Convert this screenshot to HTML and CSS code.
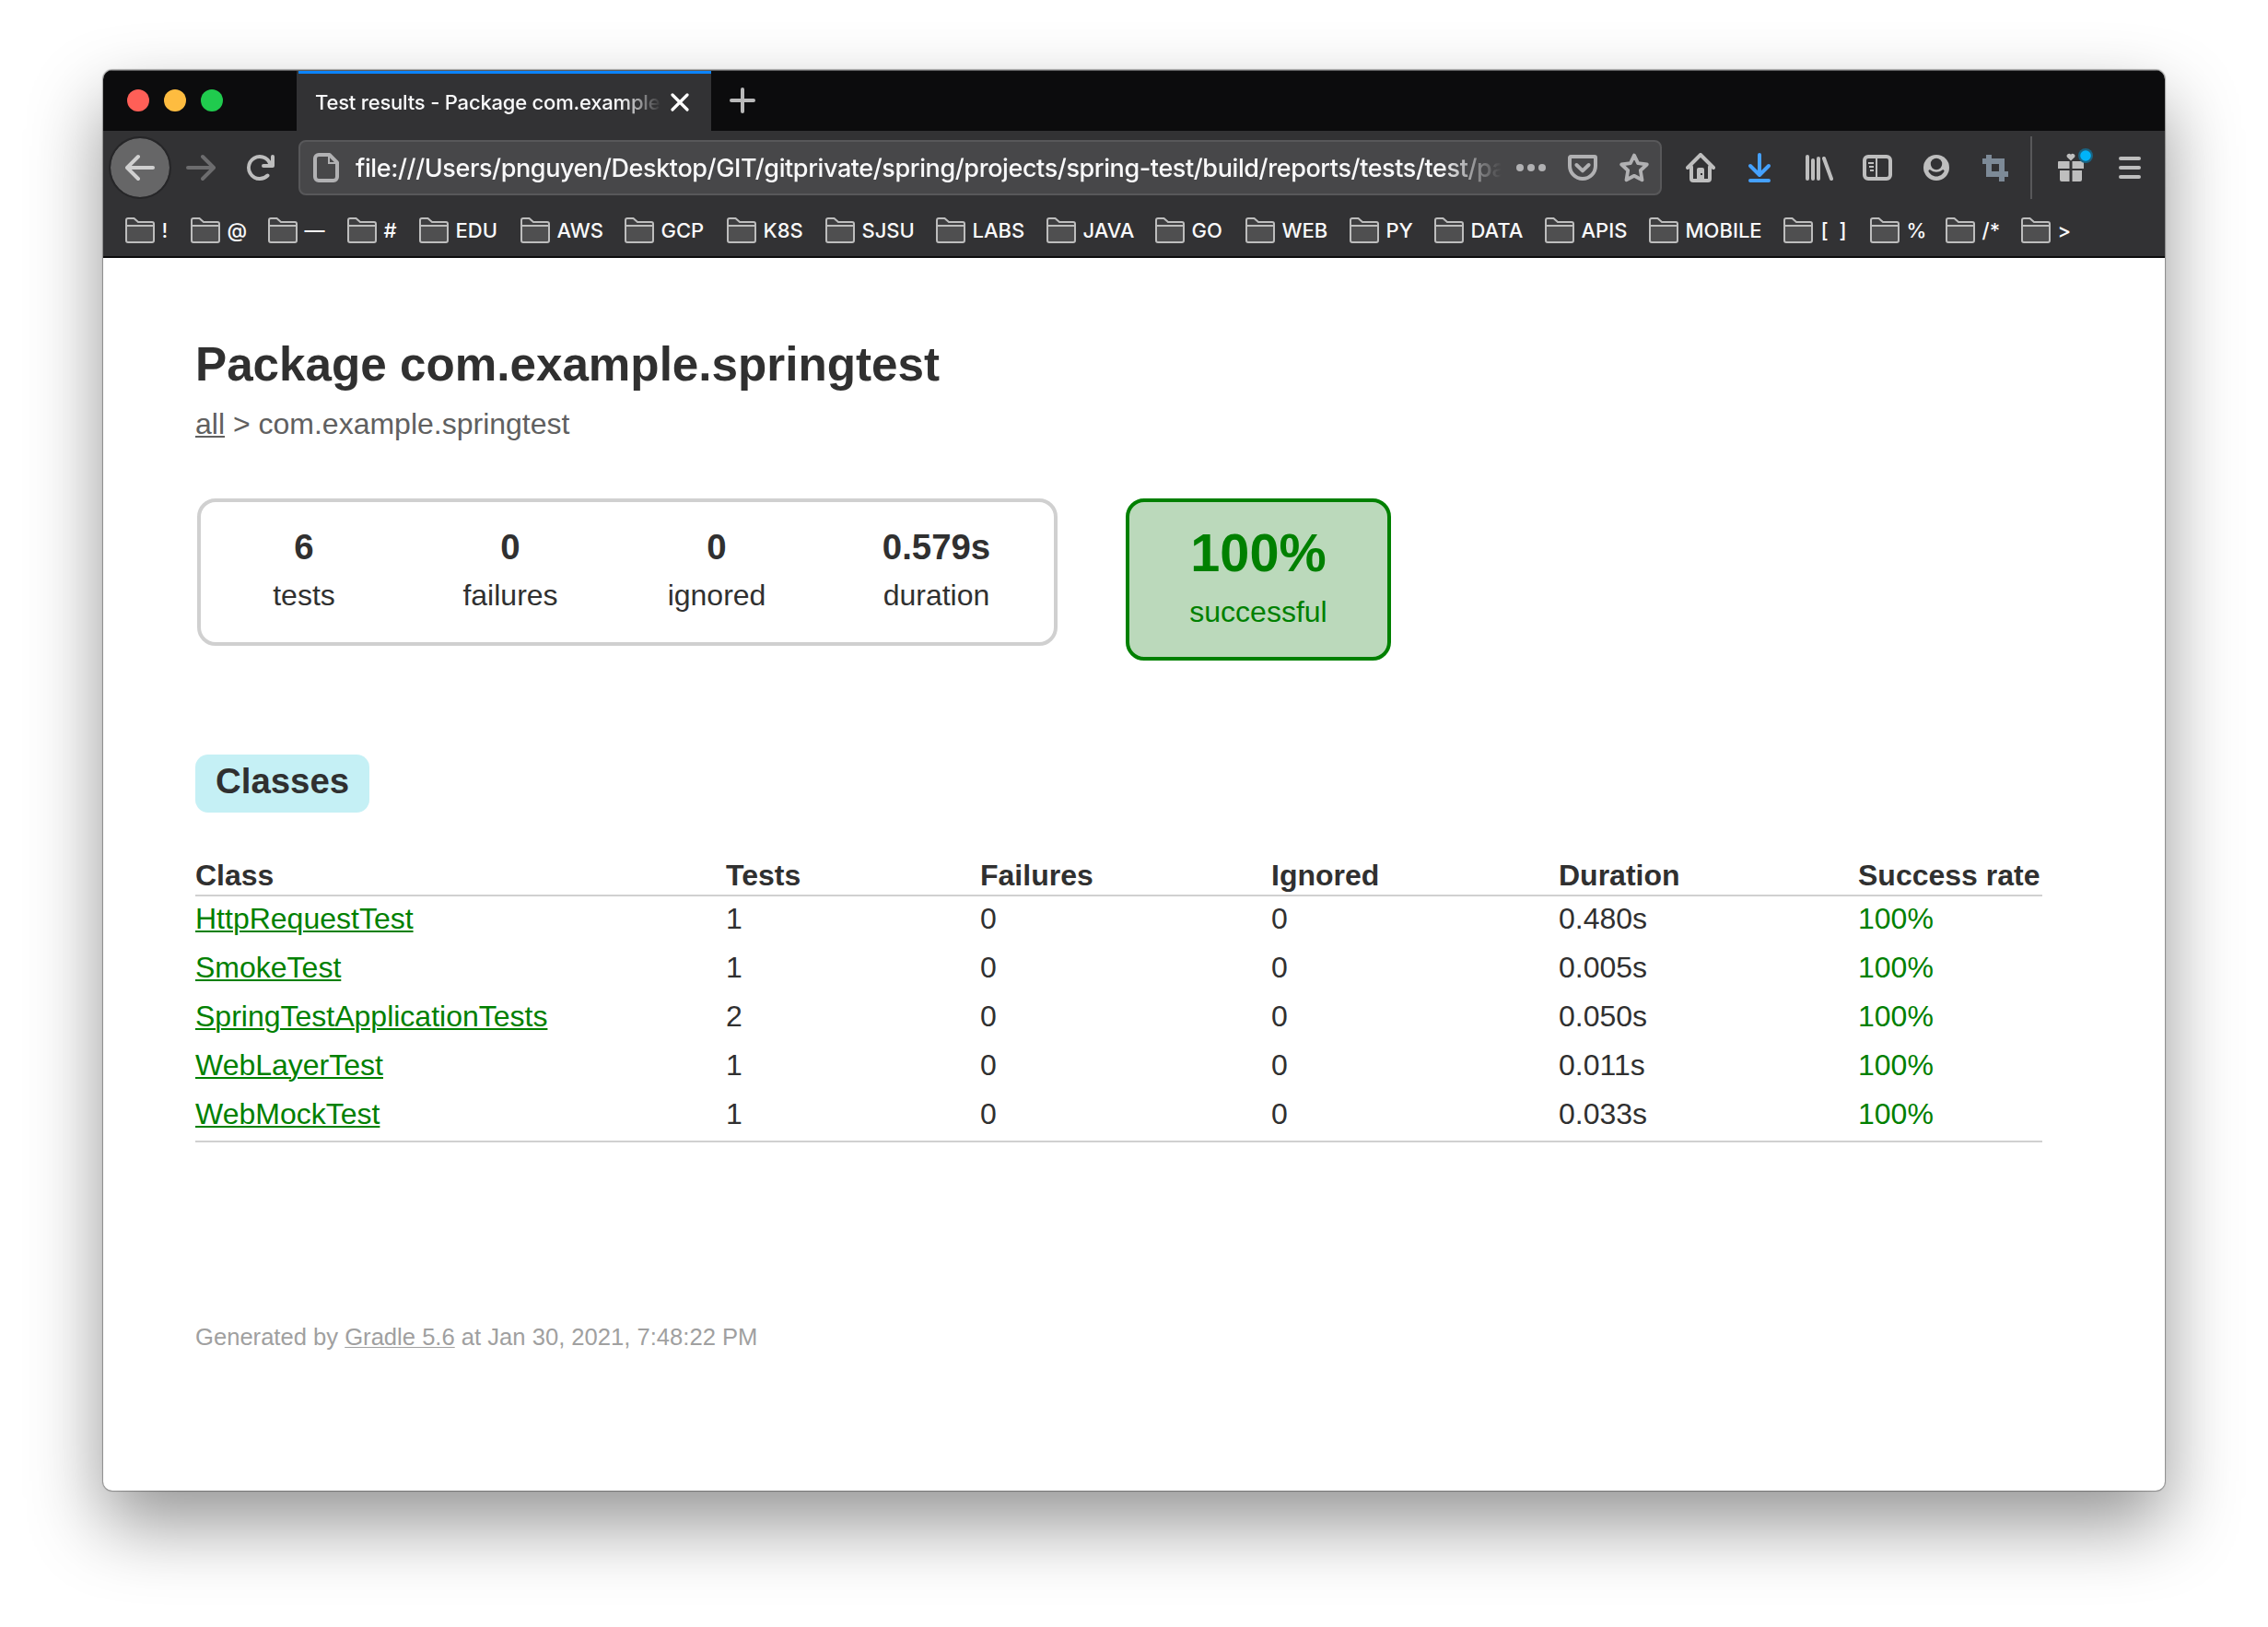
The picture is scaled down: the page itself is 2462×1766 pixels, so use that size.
FILE: index.html
```html
<!DOCTYPE html>
<html lang="en">
<head>
<meta charset="utf-8">
<title>Test results - Package com.example.springtest</title>
<link rel="stylesheet" href="styles.css">
</head>
<body>
<svg class="defs" width="0" height="0" aria-hidden="true">
  <symbol id="folder" viewBox="0 0 32 28">
    <path d="M1 9V3a2 2 0 0 1 2-2h6.500L14 5h15a2 2 0 0 1 2 2v2z" fill="#3e3e40"/>
    <path d="M1 9h30v16a2 2 0 0 1-2 2H3a2 2 0 0 1-2-2z" fill="#4f4f50"/>
    <path d="M1 3a2 2 0 0 1 2-2h6.500L14 5h15a2 2 0 0 1 2 2v18a2 2 0 0 1-2 2H3a2 2 0 0 1-2-2zM1 9h30" fill="none" stroke="#bdbdbd" stroke-width="2"/>
  </symbol>
</svg>
<div class="window">
  <header class="tabbar">
    <div class="lights"><span class="light red"></span><span class="light yellow"></span><span class="light green"></span></div>
    <div class="tab">
      <span class="tab-title">Test results - Package com.example</span>
      <svg class="close" viewBox="0 0 20 20"><path d="M2 2l16 16M18 2L2 18" stroke="#fff" stroke-width="3.200" stroke-linecap="round"/></svg>
    </div>
    <svg class="newtab" viewBox="0 0 28 28"><path d="M14 2v24M2 14h24" stroke="#b9b9b9" stroke-width="4" stroke-linecap="round"/></svg>
  </header>
  <nav class="toolbar">
    <span class="back"><svg class="icon" viewBox="0 0 16 16"><path d="M15 7H3.414l4.293-4.293a1 1 0 0 0-1.414-1.414l-6 6a1 1 0 0 0 0 1.414l6 6a1 1 0 0 0 1.414-1.414L3.414 9H15a1 1 0 0 0 0-2z" fill="#d0d0d0"/></svg></span>
    <span class="button"><svg class="icon" viewBox="0 0 16 16"><path d="M1 7h11.586L8.293 2.707a1 1 0 0 1 1.414-1.414l6 6a1 1 0 0 1 0 1.414l-6 6a1 1 0 0 1-1.414-1.414L12.586 9H1a1 1 0 0 1 0-2z" fill="#6c6c6e"/></svg></span>
    <span class="button"><svg class="icon" viewBox="0 0 16 16"><path d="M15 1a1 1 0 0 0-1 1v2.418A6.995 6.995 0 1 0 8 15a6.954 6.954 0 0 0 4.950-2.050 1 1 0 0 0-1.414-1.414A5.019 5.019 0 1 1 12.549 6H10a1 1 0 0 0 0 2h5a1 1 0 0 0 1-1V2a1 1 0 0 0-1-1z" fill="#bebebe"/></svg></span>
    <div class="urlbar">
      <svg class="icon" viewBox="0 0 16 16" fill="none" stroke="#b1b1b3"><path d="M9.800 1H4a2 2 0 0 0-2 2v10a2 2 0 0 0 2 2h8a2 2 0 0 0 2-2V5.200z" stroke-width="2" stroke-linejoin="round"/><path d="M9.500 1.500v4h4" stroke-width="1"/></svg>
      <span class="url">file:///Users/pnguyen/Desktop/GIT/gitprivate/spring/projects/spring-test/build/reports/tests/test/pa</span>
      <svg class="icon" viewBox="0 0 16 16" fill="#b1b1b3"><circle cx="2" cy="8" r="2"/><circle cx="8" cy="8" r="2"/><circle cx="14" cy="8" r="2"/></svg>
      <svg class="icon" viewBox="0 0 16 16" fill="none" stroke="#b1b1b3" stroke-width="2" stroke-linecap="round" stroke-linejoin="round"><path d="M1.500 2h13a.5.500 0 0 1 .5.500V7A7 7 0 0 1 1 7V2.500a.5.500 0 0 1 .5-.5z"/><path d="M4.700 6.500L8 9.700l3.300-3.200"/></svg>
      <svg class="icon" viewBox="0 0 16 16" fill="none" stroke="#b1b1b3" stroke-width="1.900" stroke-linejoin="round"><path d="M8 1.300l2.050 4.250 4.850.7-3.500 3.250.85 5.150L8 12.400l-4.250 2.250.85-5.150L1.100 6.250l4.850-.7z"/></svg>
    </div>
    <span class="button"><svg class="icon" viewBox="0 0 16 16" fill="none" stroke="#bebebe" stroke-width="2" stroke-linecap="round" stroke-linejoin="round"><path d="M1 8l7-7 7 7"/><path d="M3 7.500V14a1 1 0 0 0 1 1h8a1 1 0 0 0 1-1V7.500"/><path d="M6 15V9a1 1 0 0 1 1-1h2a1 1 0 0 1 1 1v6zM8 11v1h1v-1z" fill="#bebebe" fill-rule="evenodd" stroke="none"/></svg></span>
    <span class="button"><svg class="icon" viewBox="0 0 16 16" fill="none" stroke="#45a1ff" stroke-width="2" stroke-linecap="round" stroke-linejoin="round"><path d="M8 1v10.500M3 7l5 5 5-5M3 15h10"/></svg></span>
    <span class="button"><svg class="icon" viewBox="0 0 16 16" stroke="#bebebe" stroke-width="2" stroke-linecap="round"><path d="M2 2v12M5 4v10M8 3v11M11 3l4 11"/></svg></span>
    <span class="button"><svg class="icon" viewBox="0 0 16 16" fill="none" stroke="#bebebe"><rect x="1" y="2" width="14" height="12" rx="2" stroke-width="2"/><path d="M7.500 2v12M3 5.500h3M3.500 7.500H6M4 9.500h2"/></svg></span>
    <span class="button"><svg class="icon" viewBox="0 0 16 16"><circle cx="8" cy="8" r="7" fill="#bebebe"/><circle cx="8" cy="6" r="3.100" fill="#323234"/><path d="M3.700 9.900c0-.7.600-1 1.100-.7 2 1.500 4.400 1.500 6.400 0 .5-.3 1.100 0 1.100.7C11.500 11.600 9.900 12.800 8 12.800s-3.500-1.200-4.300-2.900z" fill="#323234"/></svg></span>
    <span class="button"><svg class="icon" viewBox="0 0 32 32"><path d="M6 2h6v4h14v14h4v6h-4v5h-6v-5H6V12H2V6h4zM12 12v8h8v-8z" fill="#7d8a97" fill-rule="evenodd"/></svg></span>
    <span class="separator"></span>
    <span class="button"><svg class="gift" viewBox="0 0 36 36"><path d="M3 12h11.500v8H2v-7a1 1 0 0 1 1-1zM17.500 12H29a1 1 0 0 1 1 1v7H17.500zM4 22h10.500v12H6a2 2 0 0 1-2-2zM17.500 22H28v10a2 2 0 0 1-2 2h-8.500zM16 11.500l-4.200-4a2.500 2.500 0 0 1 4.200-2.700 2.500 2.500 0 0 1 4.200 2.700z" fill="#bebebe"/><circle cx="32" cy="6" r="8" fill="#1a6382"/><circle cx="32" cy="6" r="5.800" fill="#00b3f9"/></svg></span>
    <span class="button"><svg class="icon" viewBox="0 0 16 16" stroke="#bebebe" stroke-width="2" stroke-linecap="round"><path d="M3 3h10M3 8h10M3 13h10"/></svg></span>
  </nav>
  <ul class="bookmarks">
    <li><svg class="folder"><use href="#folder"/></svg>!</li>
    <li><svg class="folder"><use href="#folder"/></svg>@</li>
    <li><svg class="folder"><use href="#folder"/></svg>—</li>
    <li><svg class="folder"><use href="#folder"/></svg>#</li>
    <li><svg class="folder"><use href="#folder"/></svg>EDU</li>
    <li><svg class="folder"><use href="#folder"/></svg>AWS</li>
    <li><svg class="folder"><use href="#folder"/></svg>GCP</li>
    <li><svg class="folder"><use href="#folder"/></svg>K8S</li>
    <li><svg class="folder"><use href="#folder"/></svg>SJSU</li>
    <li><svg class="folder"><use href="#folder"/></svg>LABS</li>
    <li><svg class="folder"><use href="#folder"/></svg>JAVA</li>
    <li><svg class="folder"><use href="#folder"/></svg>GO</li>
    <li><svg class="folder"><use href="#folder"/></svg>WEB</li>
    <li><svg class="folder"><use href="#folder"/></svg>PY</li>
    <li><svg class="folder"><use href="#folder"/></svg>DATA</li>
    <li><svg class="folder"><use href="#folder"/></svg>APIS</li>
    <li><svg class="folder"><use href="#folder"/></svg>MOBILE</li>
    <li class="wide"><svg class="folder"><use href="#folder"/></svg>[ ]</li>
    <li><svg class="folder"><use href="#folder"/></svg>%</li>
    <li><svg class="folder"><use href="#folder"/></svg>/*</li>
    <li><svg class="folder"><use href="#folder"/></svg>&gt;</li>
  </ul>
  <main class="report">
    <h1>Package com.example.springtest</h1>
    <div class="breadcrumbs"><a href="#">all</a> &gt; com.example.springtest</div>
    <section class="summary">
      <div class="counters">
        <div class="counter"><strong>6</strong><span>tests</span></div>
        <div class="counter"><strong>0</strong><span>failures</span></div>
        <div class="counter"><strong>0</strong><span>ignored</span></div>
        <div class="counter"><strong>0.579s</strong><span>duration</span></div>
      </div>
      <div class="rate"><strong>100%</strong><span>successful</span></div>
    </section>
    <h2>Classes</h2>
    <table>
      <colgroup><col class="c-class"><col class="c-tests"><col class="c-failures"><col class="c-ignored"><col class="c-duration"><col class="c-rate"></colgroup>
      <thead><tr><th>Class</th><th>Tests</th><th>Failures</th><th>Ignored</th><th>Duration</th><th>Success rate</th></tr></thead>
      <tbody>
        <tr><td><a href="#">HttpRequestTest</a></td><td>1</td><td>0</td><td>0</td><td>0.480s</td><td class="success">100%</td></tr>
        <tr><td><a href="#">SmokeTest</a></td><td>1</td><td>0</td><td>0</td><td>0.005s</td><td class="success">100%</td></tr>
        <tr><td><a href="#">SpringTestApplicationTests</a></td><td>2</td><td>0</td><td>0</td><td>0.050s</td><td class="success">100%</td></tr>
        <tr><td><a href="#">WebLayerTest</a></td><td>1</td><td>0</td><td>0</td><td>0.011s</td><td class="success">100%</td></tr>
        <tr><td><a href="#">WebMockTest</a></td><td>1</td><td>0</td><td>0</td><td>0.033s</td><td class="success">100%</td></tr>
      </tbody>
    </table>
    <footer>Generated by <a href="#">Gradle 5.6</a> at Jan 30, 2021, 7:48:22 PM</footer>
  </main>
</div>
</body>
</html>
```
FILE: styles.css
```css
* { box-sizing: border-box; }

body {
  margin: 0;
  padding: 76px 112px 148px;
  background: #fff;
}

.defs { display: block; }

.window {
  height: 1542px;
  border-radius: 10px;
  background: #fff;
  box-shadow: 0 0 1px 1px rgba(0, 0, 0, .32), 0 36px 80px rgba(0, 0, 0, .42);
  display: flex;
  flex-direction: column;
  overflow: hidden;
  font-family: Inter, "Liberation Sans", sans-serif;
  color: #f9f9fa;
}

/* Tab strip */
.tabbar {
  height: 66px;
  flex: none;
  background: #0c0c0d;
  border-top: 1px solid #5c5c5d;
  display: flex;
  align-items: center;
}

.lights {
  width: 212px;
  height: 65px;
  padding: 0 0 1px 26px;
  border-right: 2px solid #323234;
  display: flex;
  align-items: center;
  gap: 16px;
}

.light { width: 24px; height: 24px; border-radius: 50%; }
.red { background: #ff5f57; }
.yellow { background: #febc40; }
.green { background: #20cb4e; }

.tab {
  width: 448px;
  height: 65px;
  padding-left: 18px;
  background: #323234;
  border-top: 3px solid #0a84ff;
  display: flex;
  align-items: center;
}

.tab-title {
  width: 376px;
  margin-right: 10px;
  font-size: 22px;
  font-weight: 500;
  line-height: 30px;
  letter-spacing: -.2px;
  white-space: nowrap;
  overflow: hidden;
  mask-image: linear-gradient(to left, transparent, #000 44px);
}

.close { width: 20px; height: 20px; }
.newtab { width: 28px; height: 28px; margin: 0 0 1px 20px; }

/* Navigation toolbar */
.toolbar {
  height: 80px;
  flex: none;
  background: #323234;
  display: flex;
  align-items: center;
}

.icon { width: 32px; height: 32px; flex: none; }

.back {
  width: 68px;
  height: 68px;
  margin-left: 6px;
  border: 2px solid #262628;
  border-radius: 50%;
  background: #666667;
  background-clip: padding-box;
  display: flex;
  align-items: center;
  justify-content: center;
}

.button {
  width: 64px;
  flex: none;
  display: flex;
  align-items: center;
  justify-content: center;
}

.urlbar {
  width: 1480px;
  height: 60px;
  margin: 0 10px;
  padding-left: 12px;
  border: 2px solid #58585a;
  border-radius: 8px;
  background: #474749;
  display: flex;
  align-items: center;
  gap: 24px;
}

.url {
  width: 1244px;
  margin: 0 -8px 0 -8px;
  padding-top: 2px;
  font-size: 27px;
  font-weight: 500;
  line-height: 36px;
  letter-spacing: -.4px;
  white-space: nowrap;
  overflow: hidden;
  mask-image: linear-gradient(to left, transparent, #000 66px);
}

.separator {
  width: 2px;
  height: 68px;
  margin: 0 10px 0 6px;
  background: #58585a;
}

.gift { width: 36px; height: 36px; margin: -2px 0 0 4px; overflow: visible; }

/* Bookmarks bar */
.bookmarks {
  height: 58px;
  flex: none;
  margin: 0;
  padding: 0 0 0 24px;
  list-style: none;
  background: #323234;
  border-bottom: 2px solid #0c0c0d;
  display: grid;
  grid-template-columns: 71px 84px 86px 78px 110px 113px 111px 107px 120px 120px 118px 98px 113px 92px 120px 113px 146px 94px 82px 82px 82px;
  align-items: center;
  font-size: 22px;
  font-weight: 500;
}

.bookmarks li { display: flex; align-items: center; gap: 7.5px; white-space: nowrap; }
.bookmarks .wide { gap: 8.5px; word-spacing: 6px; }
.folder { width: 32px; height: 28px; flex: none; }

/* Report page */
.report {
  padding: 86px 133px 0 100px;
  font-family: "Liberation Sans", Arial, sans-serif;
  font-size: 32px;
  line-height: 36px;
  color: #303030;
}

h1 { margin: 0 0 16px; font-size: 51.2px; line-height: 60px; }

a { color: inherit; text-decoration: underline 2px; text-underline-offset: 2px; }

.breadcrumbs { color: #606060; }

.summary {
  margin-top: 63px;
  padding-left: 2px;
  display: flex;
  align-items: flex-start;
  gap: 74px;
}

.counters {
  width: 934px;
  height: 160px;
  padding: 27px 0 0 2px;
  border: 4px solid #d0d0d0;
  border-radius: 20px;
  display: grid;
  grid-template-columns: 220px 220px 220px 249px;
  column-gap: 4px;
}

.counter, .rate { display: flex; flex-direction: column; align-items: center; }
.counter { gap: 12px; }
.counter strong { font-size: 38.4px; line-height: 44px; }

.rate {
  width: 288px;
  height: 176px;
  padding-top: 23px;
  gap: 14px;
  border: 4px solid #008000;
  border-radius: 20px;
  background: #bbd9bb;
  color: #008000;
}

.rate strong { font-size: 57.6px; line-height: 64px; }

h2 {
  width: 189px;
  height: 63px;
  margin: 102px 0 50px;
  padding: 7px 0 0 22px;
  border-radius: 14px;
  background: #c5f0f5;
  font-size: 38.4px;
  line-height: 44px;
}

table { width: 2005px; table-layout: fixed; border-collapse: separate; border-spacing: 0; }
.c-class { width: 576px; }
.c-tests { width: 276px; }
.c-failures { width: 316px; }
.c-ignored { width: 312px; }
.c-duration { width: 325px; }
.c-rate { width: 200px; }

th { height: 41px; padding: 0 0 3px; border-bottom: 2px solid #d0d0d0; text-align: left; white-space: nowrap; }
td { height: 53px; padding: 6px 0 11px; }
tbody tr:last-child td { height: 55px; border-bottom: 2px solid #d0d0d0; }
tbody a, .success { color: #008000; }

footer { margin-top: 196px; font-size: 25.6px; line-height: 30px; color: #a0a0a0; }
footer a { text-decoration-thickness: 1px; text-underline-offset: 2px; }
```
